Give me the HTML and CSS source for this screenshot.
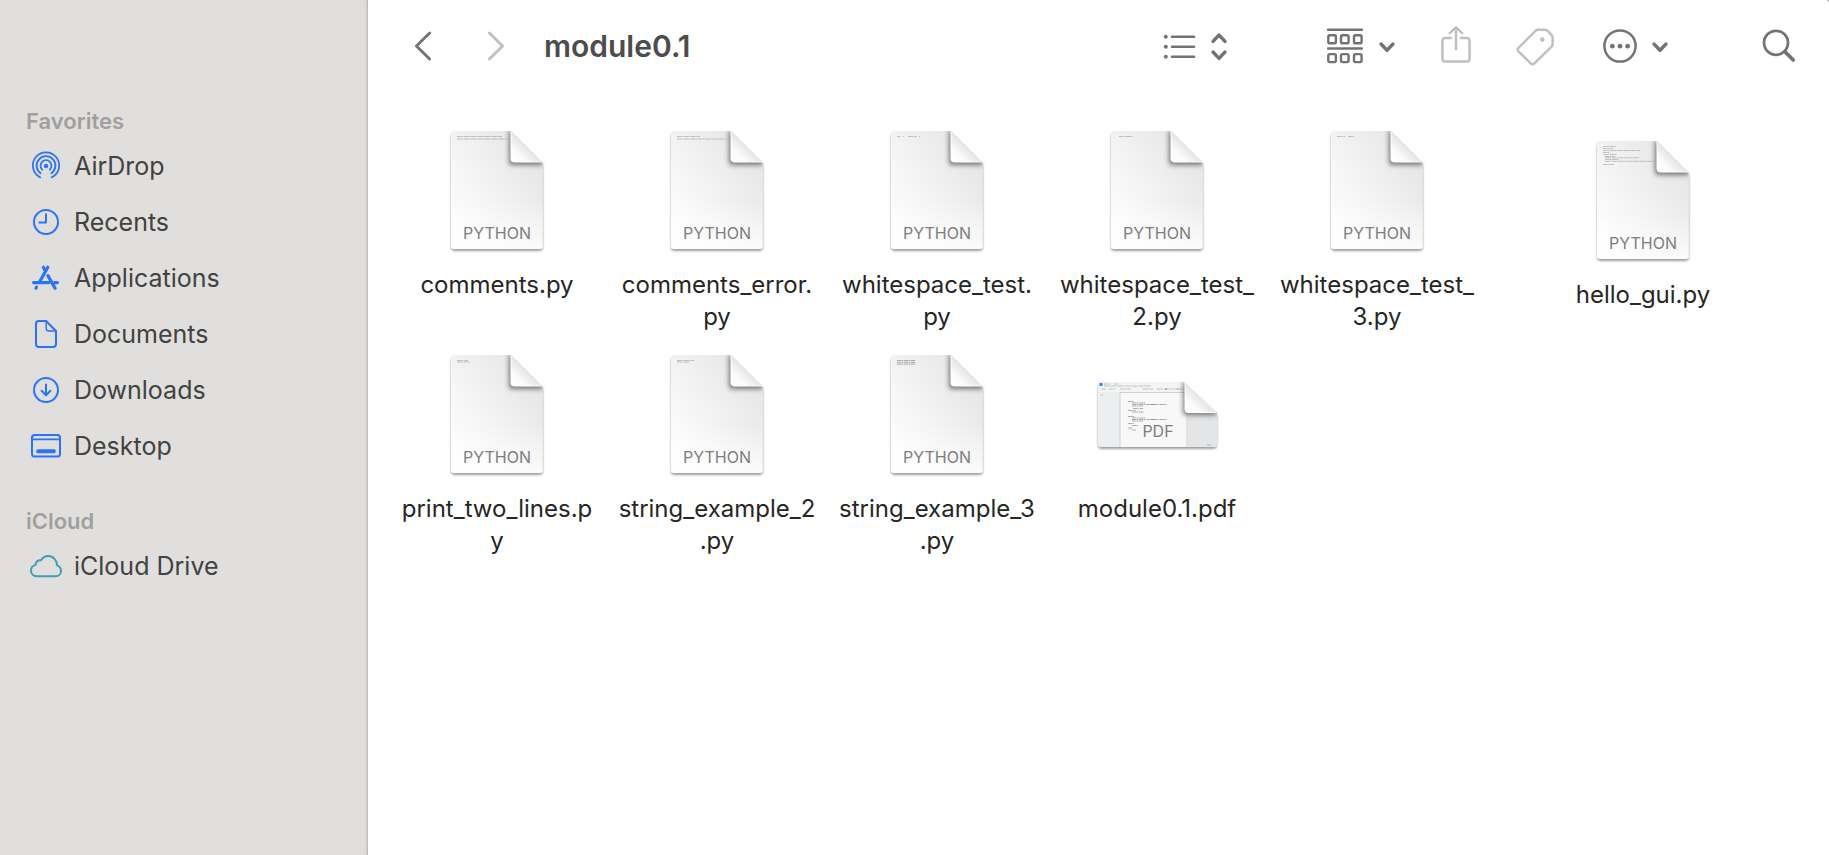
FILE: index.html
```html
<!DOCTYPE html>
<html lang="en">
<head>
<meta charset="utf-8">
<title>module0.1</title>
<link rel="stylesheet" href="styles.css">
</head>
<body>
<svg class="defs" width="0" height="0" aria-hidden="true">
  <defs>
    <linearGradient id="paper" x1="0" y1="0.75" x2="0.85" y2="0">
      <stop offset="0" stop-color="#fdfdfd"/><stop offset="0.3" stop-color="#f6f6f6"/><stop offset="1" stop-color="#e4e4e4"/>
    </linearGradient>
    <linearGradient id="foot" x1="0" y1="0" x2="0" y2="1">
      <stop offset="0.6" stop-color="#fff" stop-opacity="0"/><stop offset="1" stop-color="#fff" stop-opacity="0.7"/>
    </linearGradient>
    <linearGradient id="curl" x1="0" y1="1" x2="0.5" y2="0.5">
      <stop offset="0" stop-color="#fff"/><stop offset="0.5" stop-color="#fbfbfb"/><stop offset="1" stop-color="#e4e4e4"/>
    </linearGradient>
    <filter id="drop" x="-10%" y="-10%" width="120%" height="125%"><feDropShadow dx="0" dy="2" stdDeviation="1.2" flood-opacity="0.38"/></filter>
    <filter id="soft" x="-50%" y="-50%" width="200%" height="200%"><feGaussianBlur stdDeviation="2.6"/></filter>
    <clipPath id="sheet"><path d="M24 5H80L112 37V119Q112 123 108 123H24Q20 123 20 119V9Q20 5 24 5Z"/></clipPath>
    <clipPath id="wide"><path d="M10 32H94L126 63V93Q126 97 122 97H11Q7 97 7 93V35Q7 32 10 32Z"/></clipPath>
    <symbol id="python" viewBox="0 0 132 128">
      <path filter="url(#drop)" fill="#e6e6e6" d="M24 5H80L112 37V119Q112 123 108 123H24Q20 123 20 119V9Q20 5 24 5Z"/>
      <g clip-path="url(#sheet)">
        <path fill="url(#paper)" d="M20 5H112V123H20Z"/>
        <path fill="url(#foot)" d="M20 5H112V123H20Z"/>
        <path filter="url(#soft)" fill="#000" opacity="0.5" d="M78 3V36Q78 39 81 39H112L112 34Z"/>
      </g>
      <path fill="url(#curl)" stroke="#fff" stroke-width="1" d="M80 5V33Q80 36 83 36H111Z"/>
      <path fill="none" stroke="#ddd" stroke-width="0.8" d="M80 5L112 37V119"/>
    </symbol>
  </defs>
</svg>

<div class="window">
  <nav class="sidebar" aria-label="Sidebar">
    <section class="section">
      <h2 class="section-title">Favorites</h2>
      <a class="place" href="#"><svg class="place-icon" viewBox="0 0 34 34"><g fill="none" stroke-width="1.8" stroke-linecap="round"><path d="M11.2 28.4A13.2 13.2 0 1 1 22.8 28.4"/><path d="M11.6 24.3A9.4 9.4 0 1 1 22.4 24.3"/><path d="M13.2 20.7A5.5 5.5 0 1 1 20.8 20.7"/></g><circle cx="17" cy="17" r="2.2" fill="currentColor" stroke="none"/></svg><span>AirDrop</span></a>
      <a class="place" href="#"><svg class="place-icon" viewBox="0 0 34 34"><circle cx="17" cy="17" r="12"/><path d="M17 9.2V17.6H10.4"/></svg><span>Recents</span></a>
      <a class="place" href="#"><svg class="place-icon" viewBox="0 0 34 34"><path stroke-width="3.2" d="M18.8 6.3L10.8 20.6M14.3 6.3L16.5 10.2M4.6 21.6H19.8M18.9 14.6L26.1 27.2M25.3 21.6H28.4M7.5 26.2L6.9 27.2"/></svg><span>Applications</span></a>
      <a class="place" href="#"><svg class="place-icon" viewBox="0 0 34 34"><path d="M9.5 4H17L27 14V27Q27 30 24 30H10Q7 30 7 27V7Q7 4 9.5 4Z"/><path stroke-width="1.4" d="M17.2 4V11.5Q17.2 14 19.7 14H27"/></svg><span>Documents</span></a>
      <a class="place" href="#"><svg class="place-icon" viewBox="0 0 34 34"><circle cx="17" cy="17" r="12"/><path d="M17 11.4V22M12.6 17.8L17 22.2L21.4 17.8"/></svg><span>Downloads</span></a>
      <a class="place" href="#"><svg class="place-icon" viewBox="0 0 34 34"><rect x="3" y="6" width="28" height="21.5" rx="2.6"/><path stroke-width="1.6" d="M3 10.4H31"/><rect x="7.4" y="20.2" width="19.2" height="4" rx="1.2" fill="currentColor" stroke="none"/></svg><span>Desktop</span></a>
    </section>
    <section class="section">
      <h2 class="section-title">iCloud</h2>
      <a class="place place-cloud" href="#"><svg class="place-icon" viewBox="0 0 34 34"><path stroke-width="2" d="M7.5 27.2H26.5C30 27.2 32 24.8 32 22C32 19.2 30.2 17.2 28 16.4C28.2 11.5 24.2 7 19.4 7C16 7 13.4 8.6 12 11.4C9.4 10.6 6.6 12.6 6.6 15.9C4 16.5 2 18.6 2 21.6C2 24.8 4.4 27.2 7.5 27.2Z"/></svg><span>iCloud Drive</span></a>
    </section>
  </nav>

  <main class="content">
    <header class="toolbar">
      <div class="history">
        <button class="tool" aria-label="Back"><svg width="20" height="32" viewBox="0 0 20 32"><path stroke-width="2.9" d="M16.6 3L3.4 16L16.6 29"/></svg></button>
        <button class="tool" aria-label="Forward" disabled><svg width="20" height="32" viewBox="0 0 20 32"><path stroke-width="2.9" d="M3.4 3L16.6 16L3.4 29"/></svg></button>
      </div>
      <h1 class="title">module0.1</h1>
      <div class="tools">
        <button class="tool tool-view" aria-label="View as"><svg width="66" height="40" viewBox="0 0 66 40"><path stroke-width="2.6" d="M10 10.7H32M10 20.7H32M10 30.7H32"/><g fill="currentColor" stroke="none"><circle cx="3.8" cy="10.7" r="2"/><circle cx="3.8" cy="20.7" r="2"/><circle cx="3.8" cy="30.7" r="2"/></g><path stroke-width="3.4" d="M51 15.4L57 9L63 15.4M51 26L57 32.4L63 26"/></svg></button>
        <button class="tool" aria-label="Group by"><svg width="70" height="40" viewBox="0 0 70 40"><path stroke-width="2.6" d="M2.2 3.7H35.8M2.2 22.5H35.8"/><g stroke-width="2.4"><rect x="2.3" y="9.3" width="7.6" height="8" rx="1.6"/><rect x="15" y="9.3" width="7.6" height="8" rx="1.6"/><rect x="28" y="9.3" width="7.6" height="8" rx="1.6"/><rect x="2.3" y="28.1" width="7.6" height="8" rx="1.6"/><rect x="15" y="28.1" width="7.6" height="8" rx="1.6"/><rect x="28" y="28.1" width="7.6" height="8" rx="1.6"/></g><path stroke-width="3.4" d="M55 18L61 24.2L67 18"/></svg></button>
        <button class="tool" aria-label="Share" disabled><svg width="30" height="40" viewBox="0 0 30 40"><path stroke-width="2.5" d="M10 12H4.5Q1.4 12 1.4 15V32.4Q1.4 35.6 4.6 35.6H25.4Q28.6 35.6 28.6 32.4V15Q28.6 12 25.500 12H20M15 23V1.8M8.8 7.2L15 1.4L21.2 7.2"/></svg></button>
        <button class="tool" aria-label="Tags" disabled><svg width="38" height="40" viewBox="0 0 38 40"><path stroke-width="2.5" d="M19.4 4.8Q20.5 3.7 22 3.7H29Q30.4 3.7 31.4 4.7L35.6 9.2Q36.6 10.2 36.6 11.6V18.2Q36.6 19.6 35.6 20.6L18.4 37.4Q16.6 39 14.8 37.4L2.4 25.4Q.8 23.6 2.4 21.8Z"/><circle cx="26.3" cy="13.6" r="2.3" fill="currentColor" stroke="none"/></svg></button>
        <button class="tool tool-more" aria-label="More actions"><svg width="68" height="40" viewBox="0 0 68 40"><circle cx="18" cy="20" r="15.6" stroke-width="2.5"/><g fill="currentColor" stroke="none"><circle cx="10.4" cy="20.2" r="2.4"/><circle cx="18" cy="20.2" r="2.4"/><circle cx="25.6" cy="20.2" r="2.4"/></g><path stroke-width="3.4" d="M52 18L58 24.2L64 18"/></svg></button>
        <button class="tool tool-search" aria-label="Search"><svg width="34" height="40" viewBox="0 0 34 40"><circle cx="14" cy="16.8" r="12" stroke-width="2.7"/><path stroke-width="3.8" d="M23.2 26L31.2 34"/></svg></button>
      </div>
    </header>

    <div class="files">
      <figure class="file"><svg class="thumb" viewBox="0 0 132 128"><use href="#python"/><path class="code" d="M26 10.5H71M26 13H76"/><text class="kind" x="66" y="113">PYTHON</text></svg><figcaption class="name">comments.py</figcaption></figure>
      <figure class="file"><svg class="thumb" viewBox="0 0 132 128"><use href="#python"/><path class="code" d="M26 10.5H49M26 13H76"/><text class="kind" x="66" y="113">PYTHON</text></svg><figcaption class="name">comments_error.<br>py</figcaption></figure>
      <figure class="file"><svg class="thumb" viewBox="0 0 132 128"><use href="#python"/><path class="code" d="M26 10.5H29.5M32 10.5H33M37 10.5H46M48 10.5H49"/><text class="kind" x="66" y="113">PYTHON</text></svg><figcaption class="name">whitespace_test.<br>py</figcaption></figure>
      <figure class="file"><svg class="thumb" viewBox="0 0 132 128"><use href="#python"/><path class="code" d="M28 10.5H42"/><text class="kind" x="66" y="113">PYTHON</text></svg><figcaption class="name">whitespace_test_<br>2.py</figcaption></figure>
      <figure class="file"><svg class="thumb" viewBox="0 0 132 128"><use href="#python"/><path class="code" d="M26 10.5H34M37 10.5H43"/><text class="kind" x="66" y="113">PYTHON</text></svg><figcaption class="name">whitespace_test_<br>3.py</figcaption></figure>
      <figure class="file file-loose"><svg class="thumb" viewBox="0 0 132 128"><use href="#python"/><path class="code" d="M26 10.5H39M26 12.5H36M26 14.5H63M26 16.5H33M26 18.5H40M28 20.5H38M28 21.8H62M28 23.5H42M28 25.3H78M26 28.5H37"/><text class="kind" x="66" y="113">PYTHON</text></svg><figcaption class="name">hello_gui.py</figcaption></figure>
      <figure class="file"><svg class="thumb" viewBox="0 0 132 128"><use href="#python"/><path class="code" d="M26 10.5H37M26 12H39"/><text class="kind" x="66" y="113">PYTHON</text></svg><figcaption class="name">print_two_lines.p<br>y</figcaption></figure>
      <figure class="file"><svg class="thumb" viewBox="0 0 132 128"><use href="#python"/><path class="code" d="M26 10.5H43M26 12H39"/><text class="kind" x="66" y="113">PYTHON</text></svg><figcaption class="name">string_example_2<br>.py</figcaption></figure>
      <figure class="file"><svg class="thumb" viewBox="0 0 132 128"><use href="#python"/><path class="code code-dark" d="M26 10.5H44M26 12.3H44M26 14.1H44"/><text class="kind" x="66" y="113">PYTHON</text></svg><figcaption class="name">string_example_3<br>.py</figcaption></figure>
      <figure class="file"><svg class="thumb" viewBox="0 0 132 128">
        <path filter="url(#drop)" fill="#e8e8e8" d="M10 32H94L126 63V93Q126 97 122 97H11Q7 97 7 93V35Q7 32 10 32Z"/>
        <g clip-path="url(#wide)">
          <path fill="#edeeef" d="M7 32H126V97H7Z"/>
          <path fill="#f3f4f4" d="M7 32H126V42H7Z"/>
          <path fill="#f8f8f8" stroke="#cfcfcf" stroke-width="1" d="M29 42.5H96V100H29Z"/>
          <path fill="#e3e5e6" d="M96.5 42H126V97H96.5Z"/>
          <path fill="#3b7cf0" d="M8.5 33H11.5V36H8.5Z"/>
          <path class="code" d="M13 34H20M23 34H28M13 36H60M10 39H15M18 39H25M29 39H40M52 39H62M66 39H92"/>
          <path stroke="#3b7cf0" stroke-width="1.2" d="M74.5 39H76M86 39H87"/>
          <path class="code code-dark" d="M37 51.5H43M41 53H54M41 54.5H76M41 56H52M42 58.5H52M37 60.5H45M41 62H53M37 66.5H44M41 68H54M41 69.5H76M41 71H52M37 73.5H43M41 75.5H47M37 78H42M41 80H45"/>
          <path stroke="#dd6666" stroke-width="1" d="M60 54.5H63M60 69.5H63"/>
          <path class="code" d="M10 45H12M116 95H120"/>
          <path filter="url(#soft)" fill="#000" opacity="0.5" d="M92 30V62Q92 65 95 65H126V62Z"/>
        </g>
        <path fill="url(#curl)" stroke="#fff" stroke-width="1" d="M94 32V59.5Q94 62.5 97 62.5H125Z"/>
        <text class="kind" x="67" y="87">PDF</text></svg><figcaption class="name">module0.1.pdf</figcaption></figure>
    </div>
  </main>
</div>
</body>
</html>
```
FILE: styles.css
```css
* {
  box-sizing: border-box;
}

html {
  background: #8a8a8a;
}

body {
  margin: 0;
  font-family: Inter, "Liberation Sans", sans-serif;
}

.defs {
  position: absolute;
}

.window {
  display: flex;
  min-height: 100vh;
  background: #fff;
  border-top-right-radius: 3px;
  overflow: hidden;
}

.sidebar {
  flex: 0 0 368px;
  padding: 104px 0 30px;
  display: flex;
  flex-direction: column;
  gap: 30px;
  background: #e0dfdd;
  border-right: 1px solid #bdbcba;
  box-shadow: inset -2px 0 2px -1px #cccbc9;
}

.section-title {
  margin: 0;
  padding-left: 26px;
  font-size: 22px;
  line-height: 34px;
  font-weight: 600;
  color: #a19f9e;
}

.place {
  display: flex;
  align-items: center;
  gap: 11px;
  height: 56px;
  padding-left: 29px;
  font-size: 25px;
  color: #424241;
  text-decoration: none;
}

.place-icon {
  width: 34px;
  height: 34px;
  color: #2b73f7;
  fill: none;
  stroke: currentColor;
  stroke-width: 2;
  stroke-linecap: round;
  stroke-linejoin: round;
}

.place-cloud .place-icon {
  color: #419fb5;
}

.content {
  flex: 1;
  min-width: 0;
}

.toolbar {
  display: flex;
  align-items: center;
  height: 92px;
  padding: 0 33px 0 45px;
}

.history {
  display: flex;
  gap: 53px;
  margin-right: 38px;
}

.tool {
  display: flex;
  padding: 0;
  border: 0;
  background: none;
  color: #737373;
}

.tool:disabled {
  color: #c0c0c0;
}

.tool svg {
  fill: none;
  stroke: currentColor;
  stroke-linecap: round;
  stroke-linejoin: round;
}

.title {
  margin: 0;
  font-size: 30px;
  line-height: 40px;
  font-weight: 600;
  color: #4c4c4c;
}

.tools {
  display: flex;
  align-items: center;
  gap: 45px;
  margin-left: auto;
}

.tool-view {
  margin-right: 53px;
}

.tool-more {
  margin-left: 3px;
}

.tool-search {
  margin-left: 47px;
}

.files {
  display: grid;
  grid-template-columns: repeat(5, 220px) 1fr;
  grid-auto-rows: 224px;
  padding: 34px 30px 0 19px;
}

.file {
  display: flex;
  flex-direction: column;
  align-items: center;
  gap: 15px;
  margin: 0;
}

.file-loose {
  padding-top: 10px;
}

.file:nth-child(7) {
  grid-column-start: 1;
}

.thumb {
  width: 132px;
  height: 128px;
}

.code {
  fill: none;
  stroke: #8c8c8c;
  stroke-width: 1;
  stroke-dasharray: 4 0.4 2 0.6;
  opacity: 0.5;
}

.code-dark {
  stroke: #666;
}

.kind {
  font-size: 16px;
  text-anchor: middle;
  fill: #7d7d7d;
}

.name {
  font-size: 24px;
  line-height: 32px;
  text-align: center;
  color: #262626;
}
```
